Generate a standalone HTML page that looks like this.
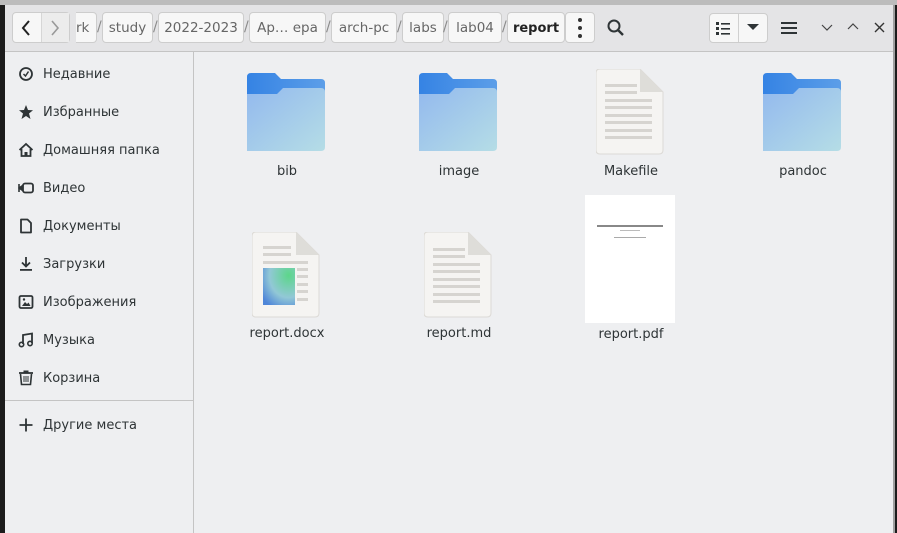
<!DOCTYPE html>
<html><head><meta charset="utf-8"><style>
*{box-sizing:border-box;margin:0;padding:0}
body{width:897px;height:533px;overflow:hidden;background:#1c1c1c;font-family:"Liberation Sans","DejaVu Sans",sans-serif;position:relative}
.win{position:absolute;left:5px;top:5px;width:890px;height:528px;background:#eeeff1;border-right:2px solid #a0a0a0}
.top{position:absolute;left:0;top:0;width:897px;height:5px;background:#bcbcbc}
.hdr{position:absolute;left:5px;top:5px;width:888px;height:47px;background:#e4e4e6;border-bottom:1px solid #c4c4c4}
.btn{position:absolute;top:12px;height:31px;background:#f7f7f7;border:1px solid #cdcdcd;border-radius:4px;font:13.5px "DejaVu Sans",sans-serif;color:#666;line-height:31px;text-align:center;white-space:nowrap;overflow:hidden}
.sep{position:absolute;top:19px;color:#8a8a8a;font:14px "DejaVu Sans",sans-serif}
.side{position:absolute;left:5px;top:52px;width:189px;height:481px;background:#eeeff1;border-right:1px solid #c4c4c4}
.item{position:absolute;left:43px;font:13px "DejaVu Sans",sans-serif;color:#2e3436}
.ic{position:absolute;left:18px}
.lbl{position:absolute;width:150px;text-align:center;font:13px "DejaVu Sans",sans-serif;color:#2e3436}
</style></head><body>
<div class="top"></div>
<div class="win"></div>
<div class="hdr"></div>
<div class="btn" style="left:12px;width:58px"></div>
<div style="position:absolute;left:41px;top:13px;width:28px;height:29px;background:#ececec;border-left:1px solid #d6d6d6"></div>
<svg style="position:absolute;left:19px;top:18px" width="16" height="20"><path d="M10 3 L4 10 L10 17" stroke="#222" stroke-width="2" fill="none"/></svg>
<svg style="position:absolute;left:47px;top:18px" width="16" height="20"><path d="M5 3 L11 10 L5 17" stroke="#999" stroke-width="1.6" fill="none"/></svg>
<div class="btn" style="left:76px;width:21px;border-left:none;border-radius:0 4px 4px 0;text-align:left;padding-left:0">rk</div>
<span class="sep" style="left:97px">/</span>
<div class="btn" style="left:102px;width:51px">study</div>
<span class="sep" style="left:153px">/</span>
<div class="btn" style="left:158px;width:86px">2022-2023</div>
<span class="sep" style="left:244px">/</span>
<div class="btn" style="left:249px;width:77px">Ар… ера</div>
<span class="sep" style="left:326px">/</span>
<div class="btn" style="left:331px;width:66px">arch-pc</div>
<span class="sep" style="left:397px">/</span>
<div class="btn" style="left:402px;width:42px">labs</div>
<span class="sep" style="left:443px">/</span>
<div class="btn" style="left:448px;width:54px">lab04</div>
<span class="sep" style="left:502px">/</span>
<div class="btn" style="left:507px;width:58px;color:#222;font-weight:bold;font-size:13px">report</div>
<div class="btn" style="left:565px;width:30px"></div>
<svg style="position:absolute;left:575px;top:16px" width="10" height="24"><circle cx="5" cy="4" r="2" fill="#333"/><circle cx="5" cy="12" r="2" fill="#333"/><circle cx="5" cy="20" r="2" fill="#333"/></svg>
<svg style="position:absolute;left:606px;top:18px" width="20" height="20"><circle cx="8" cy="8" r="5.5" stroke="#2e3436" stroke-width="2" fill="none"/><path d="M12 12 L17 17" stroke="#2e3436" stroke-width="2.4"/></svg>
<div class="btn" style="left:709px;width:59px;top:13px;height:30px"></div>
<div style="position:absolute;left:738px;top:14px;width:1px;height:28px;background:#d0d0d0"></div>
<svg style="position:absolute;left:715px;top:20px" width="18" height="16"><rect x="1" y="2" width="3" height="3" fill="#2e3436"/><rect x="1" y="7" width="3" height="3" fill="#2e3436"/><rect x="1" y="12" width="3" height="3" fill="#2e3436"/><rect x="6" y="3" width="9" height="1.6" fill="#2e3436"/><rect x="6" y="8" width="9" height="1.6" fill="#2e3436"/><rect x="6" y="13" width="9" height="1.6" fill="#2e3436"/></svg>
<svg style="position:absolute;left:745px;top:22px" width="16" height="10"><path d="M2 2 L14 2 L8 8 Z" fill="#2e3436"/></svg>
<svg style="position:absolute;left:780px;top:20px" width="18" height="16"><rect x="1" y="2" width="16" height="2" fill="#2e3436"/><rect x="1" y="7" width="16" height="2" fill="#2e3436"/><rect x="1" y="12" width="16" height="2" fill="#2e3436"/></svg>
<svg style="position:absolute;left:820px;top:22px" width="14" height="12"><path d="M2 3 L7 8 L12 3" stroke="#444" stroke-width="1.2" fill="none"/></svg>
<svg style="position:absolute;left:846px;top:21px" width="14" height="12"><path d="M2 8 L7 3 L12 8" stroke="#444" stroke-width="1.2" fill="none"/></svg>
<svg style="position:absolute;left:873px;top:21px" width="14" height="14"><path d="M2 2 L11 11 M11 2 L2 11" stroke="#333" stroke-width="1.4"/></svg>

<div class="side">
<div style="position:absolute;left:0;top:348px;width:188px;height:1px;background:#c4c4c4"></div>
</div>
<svg class="ic" style="top:66px" width="16" height="16"><circle cx="8" cy="8" r="6" stroke="#2e3436" stroke-width="1.8" fill="none"/><path d="M5.5 8 L7.5 10 L10.5 5.5" stroke="#2e3436" stroke-width="1.5" fill="none"/></svg>
<svg class="ic" style="top:104px" width="16" height="16"><path d="M8 1 L10 6 L15 6.3 L11 9.5 L12.5 15 L8 12 L3.5 15 L5 9.5 L1 6.3 L6 6 Z" fill="#2e3436"/></svg>
<svg class="ic" style="top:142px" width="16" height="16"><path d="M1.5 8 L8 2 L14.5 8 M3.5 7 V14 H12.5 V7" stroke="#2e3436" stroke-width="1.8" fill="none"/><rect x="6.5" y="10" width="3" height="4" fill="#2e3436"/></svg>
<svg class="ic" style="top:180px" width="16" height="16"><path d="M1 4 V12 M1 8 L4 6 V10 Z" stroke="#2e3436" stroke-width="1.6" fill="#2e3436"/><rect x="5" y="3.5" width="10" height="9" rx="2" stroke="#2e3436" stroke-width="1.8" fill="none"/></svg>
<svg class="ic" style="top:218px" width="16" height="16"><path d="M3 1.5 H9.5 L13 5 V14.5 H3 Z" stroke="#2e3436" stroke-width="1.8" fill="none" stroke-linejoin="round"/></svg>
<svg class="ic" style="top:256px" width="16" height="16"><path d="M8 1 V10 M4 6.5 L8 10.5 L12 6.5" stroke="#2e3436" stroke-width="1.8" fill="none"/><rect x="2" y="13" width="12" height="1.8" fill="#2e3436"/></svg>
<svg class="ic" style="top:294px" width="16" height="16"><rect x="1.5" y="2" width="13" height="12" rx="1.5" stroke="#2e3436" stroke-width="1.8" fill="none"/><path d="M4 12 L7 8 L9 10 L10.5 8.5 L12.5 12 Z" fill="#2e3436"/><circle cx="6" cy="5.5" r="1.2" fill="#2e3436"/></svg>
<svg class="ic" style="top:332px" width="16" height="16"><path d="M5 12 V3 L14 1.5 V11" stroke="#2e3436" stroke-width="1.8" fill="none"/><circle cx="3.5" cy="12.5" r="2.2" stroke="#2e3436" stroke-width="1.6" fill="none"/><circle cx="12" cy="11.5" r="2.2" stroke="#2e3436" stroke-width="1.6" fill="none"/></svg>
<svg class="ic" style="top:370px" width="16" height="16"><path d="M1 3 H15" stroke="#2e3436" stroke-width="1.8"/><rect x="5.5" y="0.5" width="5" height="2" fill="#2e3436"/><path d="M2.5 4 L3.5 14.5 H12.5 L13.5 4" stroke="#2e3436" stroke-width="1.6" fill="none"/><path d="M6 6 V12 M8 6 V12 M10 6 V12" stroke="#2e3436" stroke-width="1"/></svg>
<svg class="ic" style="top:417px" width="16" height="16"><path d="M8 1.5 V14.5 M1.5 8 H14.5" stroke="#2e3436" stroke-width="1.8"/></svg>
<div class="item" style="top:67px">Недавние</div>
<div class="item" style="top:105px">Избранные</div>
<div class="item" style="top:143px">Домашняя папка</div>
<div class="item" style="top:181px">Видео</div>
<div class="item" style="top:219px">Документы</div>
<div class="item" style="top:257px">Загрузки</div>
<div class="item" style="top:295px">Изображения</div>
<div class="item" style="top:333px">Музыка</div>
<div class="item" style="top:371px">Корзина</div>
<div class="item" style="top:418px">Другие места</div>

<svg width="0" height="0" style="position:absolute"><defs>
<linearGradient id="fb" x1="0" y1="0" x2="1" y2="1"><stop offset="0" stop-color="#93b9ee"/><stop offset="1" stop-color="#b5dde6"/></linearGradient>
<linearGradient id="bk" x1="0" y1="0" x2="1" y2="0"><stop offset="0" stop-color="#3583e4"/><stop offset="1" stop-color="#5c9ee8"/></linearGradient>
<radialGradient id="img" cx="0.8" cy="0.2" r="1"><stop offset="0" stop-color="#5cd68a"/><stop offset="0.6" stop-color="#92c8d6"/><stop offset="1" stop-color="#4f86d8"/></radialGradient>
</defs></svg>

<svg style="position:absolute;left:247px;top:73px" width="79" height="79"><path d="M0 4 Q0 0 4 0 H28 L34 6 H74 Q78 6 78 10 V70 H0 Z" fill="url(#bk)"/><path d="M0 21 H30 L36 15 H74 Q78 15 78 19 V74 Q78 78 74 78 H0 Z" fill="url(#fb)"/></svg>
<svg style="position:absolute;left:419px;top:73px" width="79" height="79"><path d="M0 4 Q0 0 4 0 H28 L34 6 H74 Q78 6 78 10 V70 H0 Z" fill="url(#bk)"/><path d="M0 21 H30 L36 15 H74 Q78 15 78 19 V74 Q78 78 74 78 H0 Z" fill="url(#fb)"/></svg>
<svg style="position:absolute;left:763px;top:73px" width="79" height="79"><path d="M0 4 Q0 0 4 0 H28 L34 6 H74 Q78 6 78 10 V70 H0 Z" fill="url(#bk)"/><path d="M0 21 H30 L36 15 H74 Q78 15 78 19 V74 Q78 78 74 78 H0 Z" fill="url(#fb)"/></svg>
<svg style="position:absolute;left:596px;top:69px" width="69" height="86"><path d="M4 0 H44 L67 23 V81 Q67 85 63 85 H4 Q0 85 0 81 V4 Q0 0 4 0 Z" fill="#f5f4f2" stroke="#dcdad6"/><path d="M44 0 V23 H67 Z" fill="#deddd9"/><g fill="#d6d4d0"><rect x="9" y="15" width="32" height="3"/><rect x="9" y="22" width="32" height="3"/><rect x="9" y="30" width="47" height="3"/><rect x="9" y="37" width="47" height="3"/><rect x="9" y="45" width="47" height="3"/><rect x="9" y="52" width="47" height="3"/><rect x="9" y="60" width="47" height="3"/><rect x="9" y="67" width="47" height="3"/></g></svg>
<svg style="position:absolute;left:252px;top:232px" width="69" height="86"><path d="M4 0 H44 L67 23 V81 Q67 85 63 85 H4 Q0 85 0 81 V4 Q0 0 4 0 Z" fill="#f5f4f2" stroke="#dcdad6"/><path d="M44 0 V23 H67 Z" fill="#deddd9"/><g fill="#d6d4d0"><rect x="11" y="14" width="28" height="3"/><rect x="11" y="21" width="28" height="3"/><rect x="11" y="29" width="45" height="3"/><rect x="45" y="36" width="11" height="3"/><rect x="45" y="43" width="11" height="3"/><rect x="45" y="51" width="11" height="3"/><rect x="45" y="58" width="11" height="3"/><rect x="45" y="66" width="11" height="3"/></g><rect x="11" y="36" width="32" height="37" fill="url(#img)"/></svg>
<svg style="position:absolute;left:424px;top:232px" width="69" height="86"><path d="M4 0 H44 L67 23 V81 Q67 85 63 85 H4 Q0 85 0 81 V4 Q0 0 4 0 Z" fill="#f5f4f2" stroke="#dcdad6"/><path d="M44 0 V23 H67 Z" fill="#deddd9"/><g fill="#d6d4d0"><rect x="9" y="16" width="32" height="3"/><rect x="9" y="23" width="32" height="3"/><rect x="9" y="31" width="47" height="3"/><rect x="9" y="38" width="47" height="3"/><rect x="9" y="46" width="47" height="3"/><rect x="9" y="53" width="47" height="3"/><rect x="9" y="61" width="47" height="3"/><rect x="9" y="68" width="47" height="3"/></g></svg>
<div style="position:absolute;left:585px;top:195px;width:90px;height:128px;background:#fff"></div>
<div style="position:absolute;left:597px;top:225px;width:66px;height:2px;background:#888"></div>
<div style="position:absolute;left:620px;top:230px;width:20px;height:1px;background:#bbb"></div>
<div style="position:absolute;left:614px;top:237px;width:32px;height:1px;background:#aaa"></div>

<div class="lbl" style="left:212px;top:164px">bib</div>
<div class="lbl" style="left:384px;top:164px">image</div>
<div class="lbl" style="left:556px;top:164px">Makefile</div>
<div class="lbl" style="left:728px;top:164px">pandoc</div>
<div class="lbl" style="left:212px;top:326px">report.docx</div>
<div class="lbl" style="left:384px;top:326px">report.md</div>
<div class="lbl" style="left:556px;top:327px">report.pdf</div>
</body></html>
